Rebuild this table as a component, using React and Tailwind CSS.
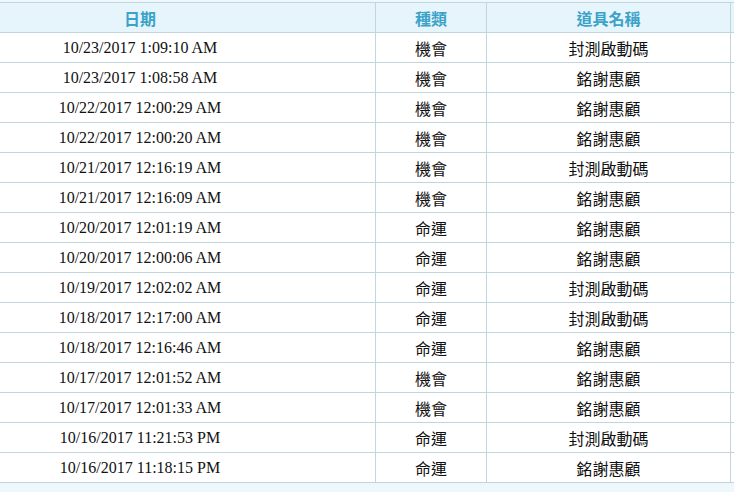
const ROWS = [
  ['10/23/2017 1:09:10 AM', '機會', '封測啟動碼'],
  ['10/23/2017 1:08:58 AM', '機會', '銘謝惠顧'],
  ['10/22/2017 12:00:29 AM', '機會', '銘謝惠顧'],
  ['10/22/2017 12:00:20 AM', '機會', '銘謝惠顧'],
  ['10/21/2017 12:16:19 AM', '機會', '封測啟動碼'],
  ['10/21/2017 12:16:09 AM', '機會', '銘謝惠顧'],
  ['10/20/2017 12:01:19 AM', '命運', '銘謝惠顧'],
  ['10/20/2017 12:00:06 AM', '命運', '銘謝惠顧'],
  ['10/19/2017 12:02:02 AM', '命運', '封測啟動碼'],
  ['10/18/2017 12:17:00 AM', '命運', '封測啟動碼'],
  ['10/18/2017 12:16:46 AM', '命運', '銘謝惠顧'],
  ['10/17/2017 12:01:52 AM', '機會', '銘謝惠顧'],
  ['10/17/2017 12:01:33 AM', '機會', '銘謝惠顧'],
  ['10/16/2017 11:21:53 PM', '命運', '封測啟動碼'],
  ['10/16/2017 11:18:15 PM', '命運', '銘謝惠顧'],
];

const cjk = "font-['Noto_Sans_CJK_TC','Noto_Sans',sans-serif]";

export default function App() {
  return (
    <div className="h-[492px] w-[734px] overflow-hidden bg-[#eef8fc] pt-[2px]">
      <div className="grid grid-cols-[375px_111px_244px_60px] border-t border-[#c2d5dc] w-[790px]">
        {/* header */}
        <div className={`h-[30px] flex items-center justify-center pr-[95px] border-b border-[#c2d5dc] bg-[#e6f5fb] text-[16px] font-bold text-[#3ba3c8] ${cjk}`}>
          日期
        </div>
        <div className={`h-[30px] flex items-center justify-center border-b border-l border-[#c2d5dc] bg-[#e6f5fb] text-[16px] font-bold text-[#3ba3c8] ${cjk}`}>
          種類
        </div>
        <div className={`h-[30px] flex items-center justify-center border-b border-l border-[#c2d5dc] bg-[#e6f5fb] text-[16px] font-bold text-[#3ba3c8] ${cjk}`}>
          道具名稱
        </div>
        <div className="h-[30px] border-b border-l border-[#c2d5dc] bg-[#e6f5fb]" />

        {ROWS.map(([date, kind, item], i) => (
          <div key={i} className="contents">
            <div className="h-[30px] flex items-center justify-center pr-[95px] border-b border-[#c2d5dc] bg-white text-[16px] text-[#111] font-['Liberation_Serif',serif]">
              {date}
            </div>
            <div className={`h-[30px] flex items-center justify-center border-b border-l border-[#c2d5dc] bg-white text-[16px] text-[#111] ${cjk}`}>
              {kind}
            </div>
            <div className={`h-[30px] flex items-center justify-center border-b border-l border-[#c2d5dc] bg-white text-[16px] text-[#111] ${cjk}`}>
              {item}
            </div>
            <div className="h-[30px] border-b border-l border-[#c2d5dc] bg-white" />
          </div>
        ))}
      </div>
    </div>
  );
}
